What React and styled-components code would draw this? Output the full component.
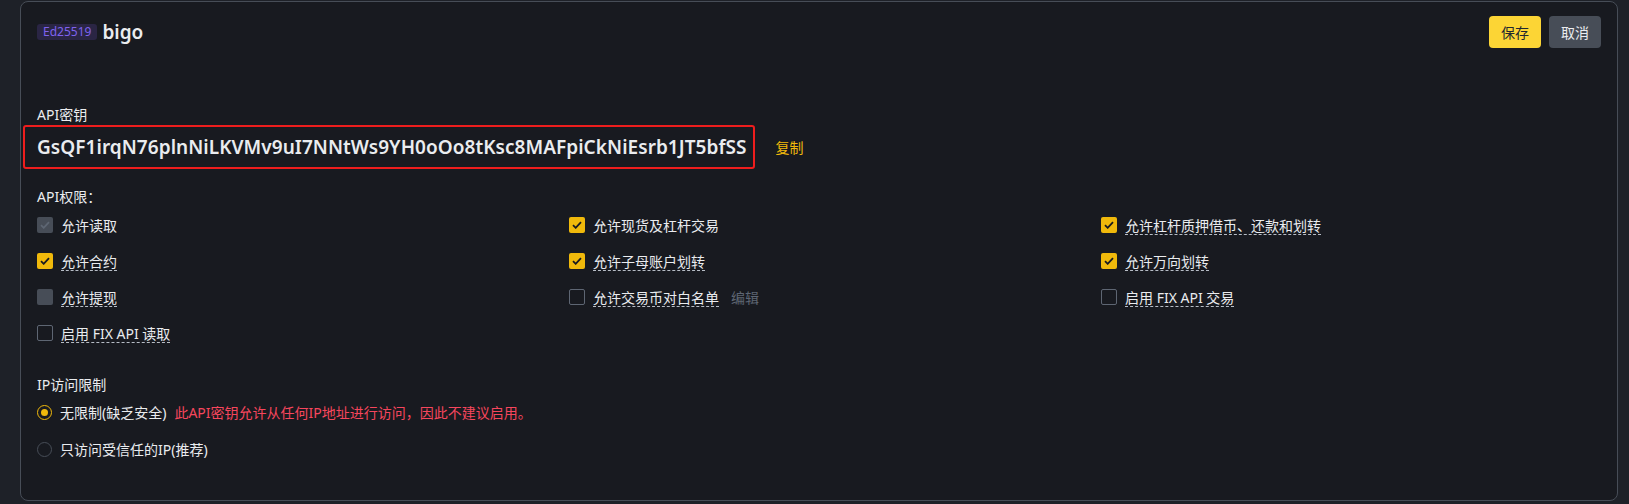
import React from 'react';
import styled, { createGlobalStyle } from 'styled-components';

const GlobalStyle = createGlobalStyle`
  html, body {
    margin: 0;
    padding: 0;
    background: #1e2128;
  }
  body {
    font-family: "Noto Sans", "Noto Sans CJK SC", sans-serif;
    color: #eaecef;
    font-size: 14px;
  }
`;

const Page = styled.div`
  padding: 1px 11px 4px 20px;
`;

const Card = styled.div`
  background: #181a20;
  border: 1px solid #474d57;
  border-radius: 8px;
  padding: 14px 16px 41px 16px;
`;

const Header = styled.div`
  display: flex;
  align-items: center;
  justify-content: space-between;
  height: 32px;
`;

const TitleWrap = styled.div`
  display: flex;
  align-items: center;
  gap: 5px;
`;

const Badge = styled.span`
  background: #2a2544;
  color: #7f62ee;
  font-size: 12px;
  line-height: 16px;
  padding: 0 6px;
  border-radius: 3px;
`;

const Title = styled.span`
  font-size: 19px;
  font-weight: 600;
  color: #eaecef;
`;

const Actions = styled.div`
  display: flex;
  gap: 8px;
`;

const Button = styled.button`
  width: 52px;
  height: 32px;
  border: none;
  border-radius: 4px;
  font-family: inherit;
  font-size: 14px;
  background: ${({ primary }) => (primary ? '#fcd535' : '#474d57')};
  color: ${({ primary }) => (primary ? '#202630' : '#eaecef')};
  padding: 0;
`;

const Label = styled.div`
  font-size: 14px;
  line-height: 20px;
  color: #eaecef;
  margin-top: ${({ top }) => top}px;
`;

const KeyRow = styled.div`
  display: flex;
  align-items: center;
  gap: 21px;
`;

const KeyBox = styled.div`
  margin-left: -14px;
  height: 44px;
  box-sizing: border-box;
  border: 2px solid #ee1d1d;
  border-radius: 3px;
  padding: 0 6px 0 12px;
  display: flex;
  align-items: center;
  font-size: 19px;
  font-weight: 600;
  letter-spacing: 0.05px;
  color: #eaecef;
`;

const CopyLink = styled.span`
  color: #f0b90b;
  font-size: 14px;
`;

const PermGrid = styled.div`
  display: grid;
  grid-template-columns: repeat(3, 1fr);
  column-gap: 32px;
  row-gap: 16px;
  margin-top: 8px;
`;

const Perm = styled.div`
  display: flex;
  align-items: center;
  height: 20px;
  gap: 8px;
`;

const Box = styled.span`
  width: 16px;
  height: 16px;
  box-sizing: border-box;
  border-radius: 2px;
  display: flex;
  align-items: center;
  justify-content: center;
  flex-shrink: 0;
  background: ${({ state }) =>
    state === 'on' ? '#f0b90b' : state === 'off' ? 'transparent' : '#474d57'};
  border: ${({ state }) => (state === 'off' ? '1px solid #5e6673' : 'none')};
`;

const PermText = styled.span`
  color: #eaecef;
  line-height: 16px;
  border-bottom: ${({ tip }) => (tip ? '1px dashed #b7bdc6' : '1px solid transparent')};
  margin-top: 2px;
`;

const EditLink = styled.span`
  color: #5e6673;
  margin-left: 4px;
`;

const RadioList = styled.div`
  display: flex;
  flex-direction: column;
  gap: 17px;
  margin-top: 7px;
`;

const RadioRow = styled.div`
  display: flex;
  align-items: center;
  height: 20px;
  gap: 8px;
`;

const RadioDot = styled.span`
  width: 15px;
  height: 15px;
  box-sizing: border-box;
  border-radius: 50%;
  border: ${({ checked }) => (checked ? '1.5px solid #f0b90b' : '1px solid #474d57')};
  display: flex;
  align-items: center;
  justify-content: center;
  flex-shrink: 0;
  &::after {
    content: '';
    display: ${({ checked }) => (checked ? 'block' : 'none')};
    width: 7px;
    height: 7px;
    border-radius: 50%;
    background: #f0b90b;
  }
`;

const Warn = styled.span`
  color: #f6465d;
`;

const Check = ({ color }) => (
  <svg width="10" height="8" viewBox="0 0 10 8">
    <path d="M1 4.2 L3.7 6.8 L9 1.2" fill="none" stroke={color} strokeWidth="1.8" />
  </svg>
);

const perms = [
  { text: '允许读取', state: 'disabled' },
  { text: '允许现货及杠杆交易', state: 'on' },
  { text: '允许杠杆质押借币、还款和划转', state: 'on', tip: true },
  { text: '允许合约', state: 'on', tip: true },
  { text: '允许子母账户划转', state: 'on', tip: true },
  { text: '允许万向划转', state: 'on', tip: true },
  { text: '允许提现', state: 'gray', tip: true },
  { text: '允许交易币对白名单', state: 'off', tip: true, edit: true },
  { text: '启用 FIX API 交易', state: 'off', tip: true },
  { text: '启用 FIX API 读取', state: 'off', tip: true },
];

export default function App() {
  return (
    <>
      <GlobalStyle />
      <Page>
        <Card>
          <Header>
            <TitleWrap>
              <Badge>Ed25519</Badge>
              <Title>bigo</Title>
            </TitleWrap>
            <Actions>
              <Button primary>保存</Button>
              <Button>取消</Button>
            </Actions>
          </Header>

          <Label top={57}>API密钥</Label>
          <KeyRow>
            <KeyBox>GsQF1irqN76plnNiLKVMv9uI7NNtWs9YH0oOo8tKsc8MAFpiCkNiEsrb1JT5bfSS</KeyBox>
            <CopyLink>复制</CopyLink>
          </KeyRow>

          <Label top={18}>API权限：</Label>
          <PermGrid>
            {perms.map((p) => (
              <Perm key={p.text}>
                <Box state={p.state}>
                  {p.state === 'on' && <Check color="#181a20" />}
                  {p.state === 'disabled' && <Check color="#5e6673" />}
                </Box>
                <PermText tip={p.tip}>{p.text}</PermText>
                {p.edit && <EditLink>编辑</EditLink>}
              </Perm>
            ))}
          </PermGrid>

          <Label top={32}>IP访问限制</Label>
          <RadioList>
            <RadioRow>
              <RadioDot checked />
              <span>无限制(缺乏安全)</span>
              <Warn>此API密钥允许从任何IP地址进行访问，因此不建议启用。</Warn>
            </RadioRow>
            <RadioRow>
              <RadioDot />
              <span>只访问受信任的IP(推荐)</span>
            </RadioRow>
          </RadioList>
        </Card>
      </Page>
    </>
  );
}
